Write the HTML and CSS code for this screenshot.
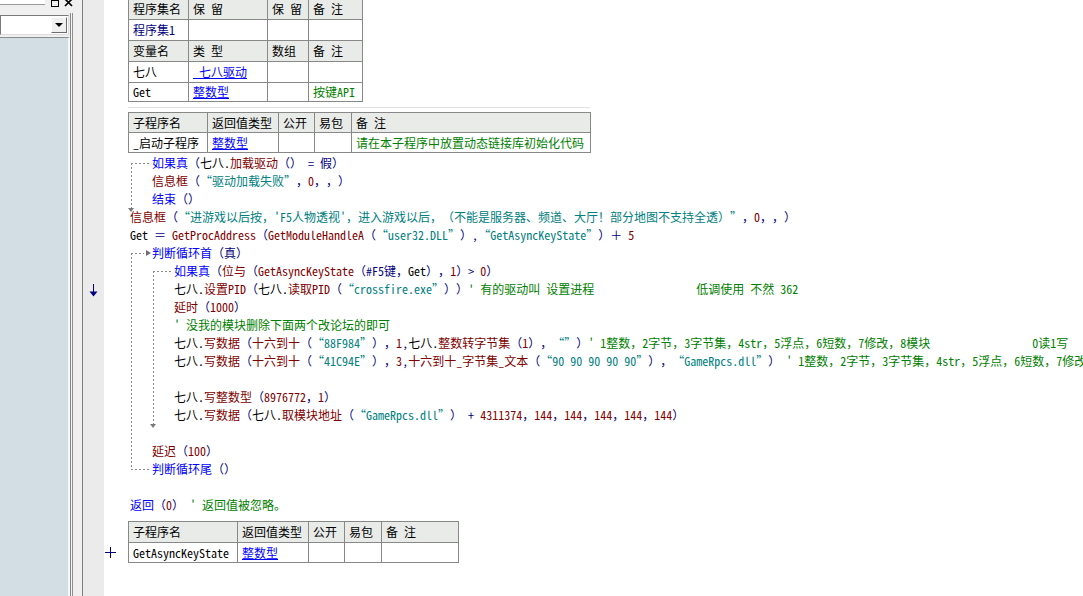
FILE: index.html
```html
<!DOCTYPE html>
<html lang="zh-CN">
<head>
<meta charset="utf-8">
<title>易语言 - 程序集1</title>
<link rel="stylesheet" href="styles.css">
</head>
<body>
<div class="app">
  <aside class="side">
    <div class="side-top">
      <div class="tabstub"></div>
      <span class="wb-max"></span>
      <svg class="wb-close" width="9" height="7" viewBox="0 0 9 7"><path d="M1 -1 L8 6 M8 -1 L1 6" stroke="#000" stroke-width="1.7"/></svg>
    </div>
    <div class="side-body">
      <div class="side-panel">
        <div class="combo"><div class="combo-btn"><span class="tri"></span></div></div>
        <div class="tree-panel"></div>
      </div>
      <div class="splitter"></div>
    </div>
  </aside>
  <main class="editor">
    <div class="tbl t1">
      <div class="hdr">程序集名</div><div class="hdr">保 留</div><div class="hdr">保 留</div><div class="hdr">备 注</div>
      <div class="nv">程序集1</div><div></div><div></div><div></div>
      <div class="hdr">变量名</div><div class="hdr">类 型</div><div class="hdr">数组</div><div class="hdr">备 注</div>
      <div>七八</div><div><span class="ty">_七八驱动</span></div><div></div><div></div>
      <div class="last">Get</div><div class="last"><span class="ty">整数型</span></div><div class="last"></div><div class="last gr">按键API</div>
    </div>
    <div class="sep"></div>
    <div class="tbl t2">
      <div class="hdr">子程序名</div><div class="hdr">返回值类型</div><div class="hdr">公开</div><div class="hdr">易包</div><div class="hdr">备 注</div>
      <div>_启动子程序</div><div><span class="ty">整数型</span></div><div></div><div></div><div class="gr">请在本子程序中放置动态链接库初始化代码</div>
    </div>
    <div class="code">
      <div class="blk blk-a">
        <div class="ln i1 head1"><span class="k">如果真</span><span class="p">（</span>七八.<span class="f">加载驱动</span><span class="p">（） = 假）</span></div>
        <div class="ln i1"><span class="f">信息框</span><span class="p">（</span><span class="s">“驱动加载失败”</span><span class="p">，</span><span class="n">0</span><span class="p">，，）</span></div>
        <div class="ln i1"><span class="k">结束</span><span class="p">（）</span></div>
      </div>
      <div class="ln i0"><span class="f">信息框</span><span class="p">（</span><span class="s">“进游戏以后按，'F5人物透视'，进入游戏以后，（不能是服务器、频道、大厅！部分地图不支持全透）”</span><span class="p">，</span><span class="n">0</span><span class="p">，，）</span></div>
      <div class="ln i0">Get<span class="p"> ＝ </span><span class="f">GetProcAddress</span><span class="p">（</span><span class="f">GetModuleHandleA</span><span class="p">（</span><span class="s">“user32.DLL”</span><span class="p">）,</span><span class="s">“GetAsyncKeyState”</span><span class="p">）＋ </span><span class="n">5</span></div>
      <div class="blk blk-loop">
        <div class="ln i1 loophead"><span class="k">判断循环首</span><span class="p">（真）</span></div>
        <div class="blk blk-b">
          <div class="ln i2 head2"><span class="k">如果真</span><span class="p">（</span><span class="f">位与</span><span class="p">（</span><span class="f">GetAsyncKeyState</span><span class="p">（#F5键，</span>Get<span class="p">），</span><span class="n">1</span><span class="p">）&gt; </span><span class="n">0</span><span class="p">）</span></div>
          <div class="ln i2"><span class="mark"><svg width="9" height="14" viewBox="0 0 9 14"><path d="M4.5 1V9" stroke="#000080" stroke-width="1"/><path d="M0.5 8.5H8.5L4.5 13.5Z" fill="#000080"/></svg></span>七八.<span class="f">设置PID</span><span class="p">（</span>七八.<span class="f">读取PID</span><span class="p">（</span><span class="s">“crossfire.exe”</span><span class="p">））</span><span class="c">' 有的驱动叫 设置进程                 低调使用 不然 362</span></div>
          <div class="ln i2"><span class="f">延时</span><span class="p">（</span><span class="n">1000</span><span class="p">）</span></div>
          <div class="ln i2"><span class="c">' 没我的模块删除下面两个改论坛的即可</span></div>
          <div class="ln i2">七八.<span class="f">写数据</span><span class="p">（</span><span class="f">十六到十</span><span class="p">（</span><span class="s">“88F984”</span><span class="p">），</span><span class="n">1</span><span class="p">,</span>七八.<span class="f">整数转字节集</span><span class="p">（</span><span class="n">1</span><span class="p">），</span><span class="s">“”</span><span class="p">）</span><span class="c">' 1整数，2字节，3字节集，4str，5浮点，6短数，7修改，8模块                 0读1写</span></div>
          <div class="ln i2">七八.<span class="f">写数据</span><span class="p">（</span><span class="f">十六到十</span><span class="p">（</span><span class="s">“41C94E”</span><span class="p">），</span><span class="n">3</span><span class="p">,</span><span class="f">十六到十_字节集_文本</span><span class="p">（</span><span class="s">“90 90 90 90 90”</span><span class="p">），</span><span class="s">“GameRpcs.dll”</span><span class="p">） </span><span class="c">' 1整数，2字节，3字节集，4str，5浮点，6短数，7修改，8模块                 0读1写</span></div>
          <div class="ln i2"></div>
          <div class="ln i2">七八.<span class="f">写整数型</span><span class="p">（</span><span class="n">8976772</span><span class="p">，</span><span class="n">1</span><span class="p">）</span></div>
          <div class="ln i2">七八.<span class="f">写数据</span><span class="p">（</span>七八.<span class="f">取模块地址</span><span class="p">（</span><span class="s">“GameRpcs.dll”</span><span class="p">） + </span><span class="n">4311374</span><span class="p">，</span><span class="n">144</span><span class="p">，</span><span class="n">144</span><span class="p">，</span><span class="n">144</span><span class="p">，</span><span class="n">144</span><span class="p">，</span><span class="n">144</span><span class="p">）</span></div>
        </div>
        <div class="ln"></div>
        <div class="ln i1"><span class="f">延迟</span><span class="p">（</span><span class="n">100</span><span class="p">）</span></div>
        <div class="ln i1 looptail"><span class="k">判断循环尾</span><span class="p">（）</span></div>
      </div>
      <div class="ln"></div>
      <div class="ln i0"><span class="k">返回</span><span class="p">（</span><span class="n">0</span><span class="p">） </span><span class="c">' 返回值被忽略。</span></div>
    </div>
    <div class="sub3">
      <div class="expander"><svg width="11" height="11" viewBox="0 0 11 11"><path d="M0 5.5H11M5.5 0V11" stroke="#000080" stroke-width="1"/></svg></div>
      <div class="tbl t3">
        <div class="hdr">子程序名</div><div class="hdr">返回值类型</div><div class="hdr">公开</div><div class="hdr">易包</div><div class="hdr">备 注</div>
        <div class="r2">GetAsyncKeyState</div><div class="r2"><span class="ty">整数型</span></div><div class="r2"></div><div class="r2"></div><div class="r2"></div>
      </div>
    </div>
  </main>
</div>
</body>
</html>
```

FILE: styles.css
```css
* { box-sizing: border-box; }
html, body {
  margin: 0;
  padding: 0;
  overflow: hidden;
}
body {
  width: 1083px;
  height: 596px;
  background: #fff;
  color: #000;
  font-family: "Noto Sans Mono CJK SC", "Noto Sans CJK SC", "Liberation Mono", monospace;
  font-size: 12px;
  text-spacing-trim: space-all;
  text-autospace: no-autospace;
  font-kerning: none;
}
.app {
  display: flex;
  height: 596px;
}

/* ---------- left side panel ---------- */
.side {
  flex: none;
  width: 83px;
  background: #f0f0f0;
  border-right: 1px solid #7d7d7d;
  display: flex;
  flex-direction: column;
}
.side-top {
  flex: none;
  height: 13px;
  display: flex;
  align-items: flex-start;
}
.tabstub {
  width: 45px;
  height: 5px;
  background: #fff;
  border-bottom: 1px solid #9a9a9a;
}
.wb-max {
  margin-left: 6px;
  margin-top: -1px;
  width: 8px;
  height: 8px;
  border: 1px solid #000;
  border-top-width: 2px;
}
.wb-close {
  margin-left: 5px;
  display: block;
}
.side-body {
  flex: 1;
  display: flex;
}
.side-panel {
  width: 70px;
  display: flex;
  flex-direction: column;
}
.combo {
  margin-top: 2px;
  width: 69px;
  height: 20px;
  background: #fff;
  border: 1px solid #7a7a7a;
  border-right-color: #dcdcdc;
  border-bottom-color: #dcdcdc;
  padding: 1px;
  display: flex;
  justify-content: flex-end;
}
.combo-btn {
  width: 16px;
  height: 16px;
  background: #f0f0f0;
  border: 1px solid;
  border-color: #fff #6d6d6d #6d6d6d #fff;
  display: flex;
  align-items: center;
  justify-content: center;
}
.tri {
  width: 0;
  height: 0;
  border-left: 4px solid transparent;
  border-right: 4px solid transparent;
  border-top: 4px solid #000;
}
.tree-panel {
  margin-top: 2px;
  flex: 1;
  background: #d3dee4;
  border-top: 1px solid #8b8b8b;
  border-right: 2px solid #f7f7f7;
}
.splitter {
  width: 12px;
  background: linear-gradient(to right, #858585 0 1px, #f7f7f7 1px 2px, #8f8f8f 2px 3px, #f0f0f0 3px);
}

/* ---------- editor ---------- */
.editor {
  flex: 1;
  min-width: 0;
  position: relative;
  background: #fff;
  border-left: 21px solid #ebebeb;
}

.tbl {
  display: grid;
  width: max-content;
  margin-left: 24px;
  border-top: 1px solid #888;
  border-left: 1px solid #888;
}
.tbl > div {
  height: 21px;
  line-height: 20px;
  padding-left: 4px;
  white-space: nowrap;
  border-right: 1px solid #888;
  border-bottom: 1px solid #888;
}
.t1 {
  margin-top: -2px;
  grid-template-columns: 60px 79px 41px 54px;
}
.t1 > div.last {
  height: 19px;
  line-height: 18px;
}
.t2 {
  grid-template-columns: 79px 71px 36px 37px 239px;
}
.t2 > div {
  height: 20px;
  line-height: 19px;
}
.t3 {
  margin-left: 0;
  grid-template-columns: 109px 71px 36px 37px 77px;
}
.t3 > div.r2 {
  height: 20px;
  line-height: 19px;
}
.tbl > div.hdr { background: #e9ebe9; }
.nv { color: #000080; }
.gr { color: #008000; }
.ty { color: #0000ff; text-decoration: underline; }

.sep {
  margin: 5px 0 4px 24px;
  width: 462px;
  height: 1px;
  background: #e2e2e2;
}

/* ---------- code lines ---------- */
.code { margin-top: 1px; }
.ln {
  position: relative;
  height: 18px;
  line-height: 18px;
  white-space: pre;
}
.i0 { padding-left: 26px; }
.i1 { padding-left: 48px; }
.i2 { padding-left: 70px; }

.k { color: #0000ff; }
.f { color: #800000; }
.s { color: #008080; }
.n { color: #800000; }
.p { color: #000080; }
.c { color: #008000; }

.mark {
  position: absolute;
  left: -15px;
  top: 3px;
  width: 9px;
  height: 14px;
}
.mark svg { display: block; }

/* tree connectors */
.blk { position: relative; }
.blk::before {
  content: "";
  position: absolute;
  width: 1px;
  background: repeating-linear-gradient(to bottom, #8a8a8a 0 2px, transparent 2px 4px);
}
.blk-a::before { left: 27px; top: 9px; bottom: -2px; }
.blk-b::before { left: 49px; top: 9px; bottom: -2px; }
.blk-loop::before { left: 27px; top: 9px; bottom: 9px; }
.blk-a::after,
.blk-b::after {
  content: "";
  position: absolute;
  bottom: -4px;
  width: 0;
  height: 0;
  border-left: 3px solid transparent;
  border-right: 3px solid transparent;
  border-top: 4px solid #7a7a7a;
}
.blk-a::after { left: 24px; }
.blk-b::after { left: 46px; }

.head1::before,
.head2::before,
.loophead::before,
.looptail::before {
  content: "";
  position: absolute;
  top: 9px;
  height: 1px;
  background: repeating-linear-gradient(to right, #8a8a8a 0 2px, transparent 2px 4px);
}
.head1::before { left: 27px; width: 19px; }
.head2::before { left: 49px; width: 19px; }
.loophead::before { left: 27px; width: 13px; }
.looptail::before { left: 27px; width: 19px; }
.loophead::after {
  content: "";
  position: absolute;
  left: 42px;
  top: 6px;
  width: 0;
  height: 0;
  border-top: 3px solid transparent;
  border-bottom: 3px solid transparent;
  border-left: 5px solid #707070;
}

.sub3 {
  display: flex;
  margin-top: 7px;
}
.expander {
  width: 24px;
  padding-top: 26px;
  padding-left: 1px;
}
.expander svg { display: block; }
```
